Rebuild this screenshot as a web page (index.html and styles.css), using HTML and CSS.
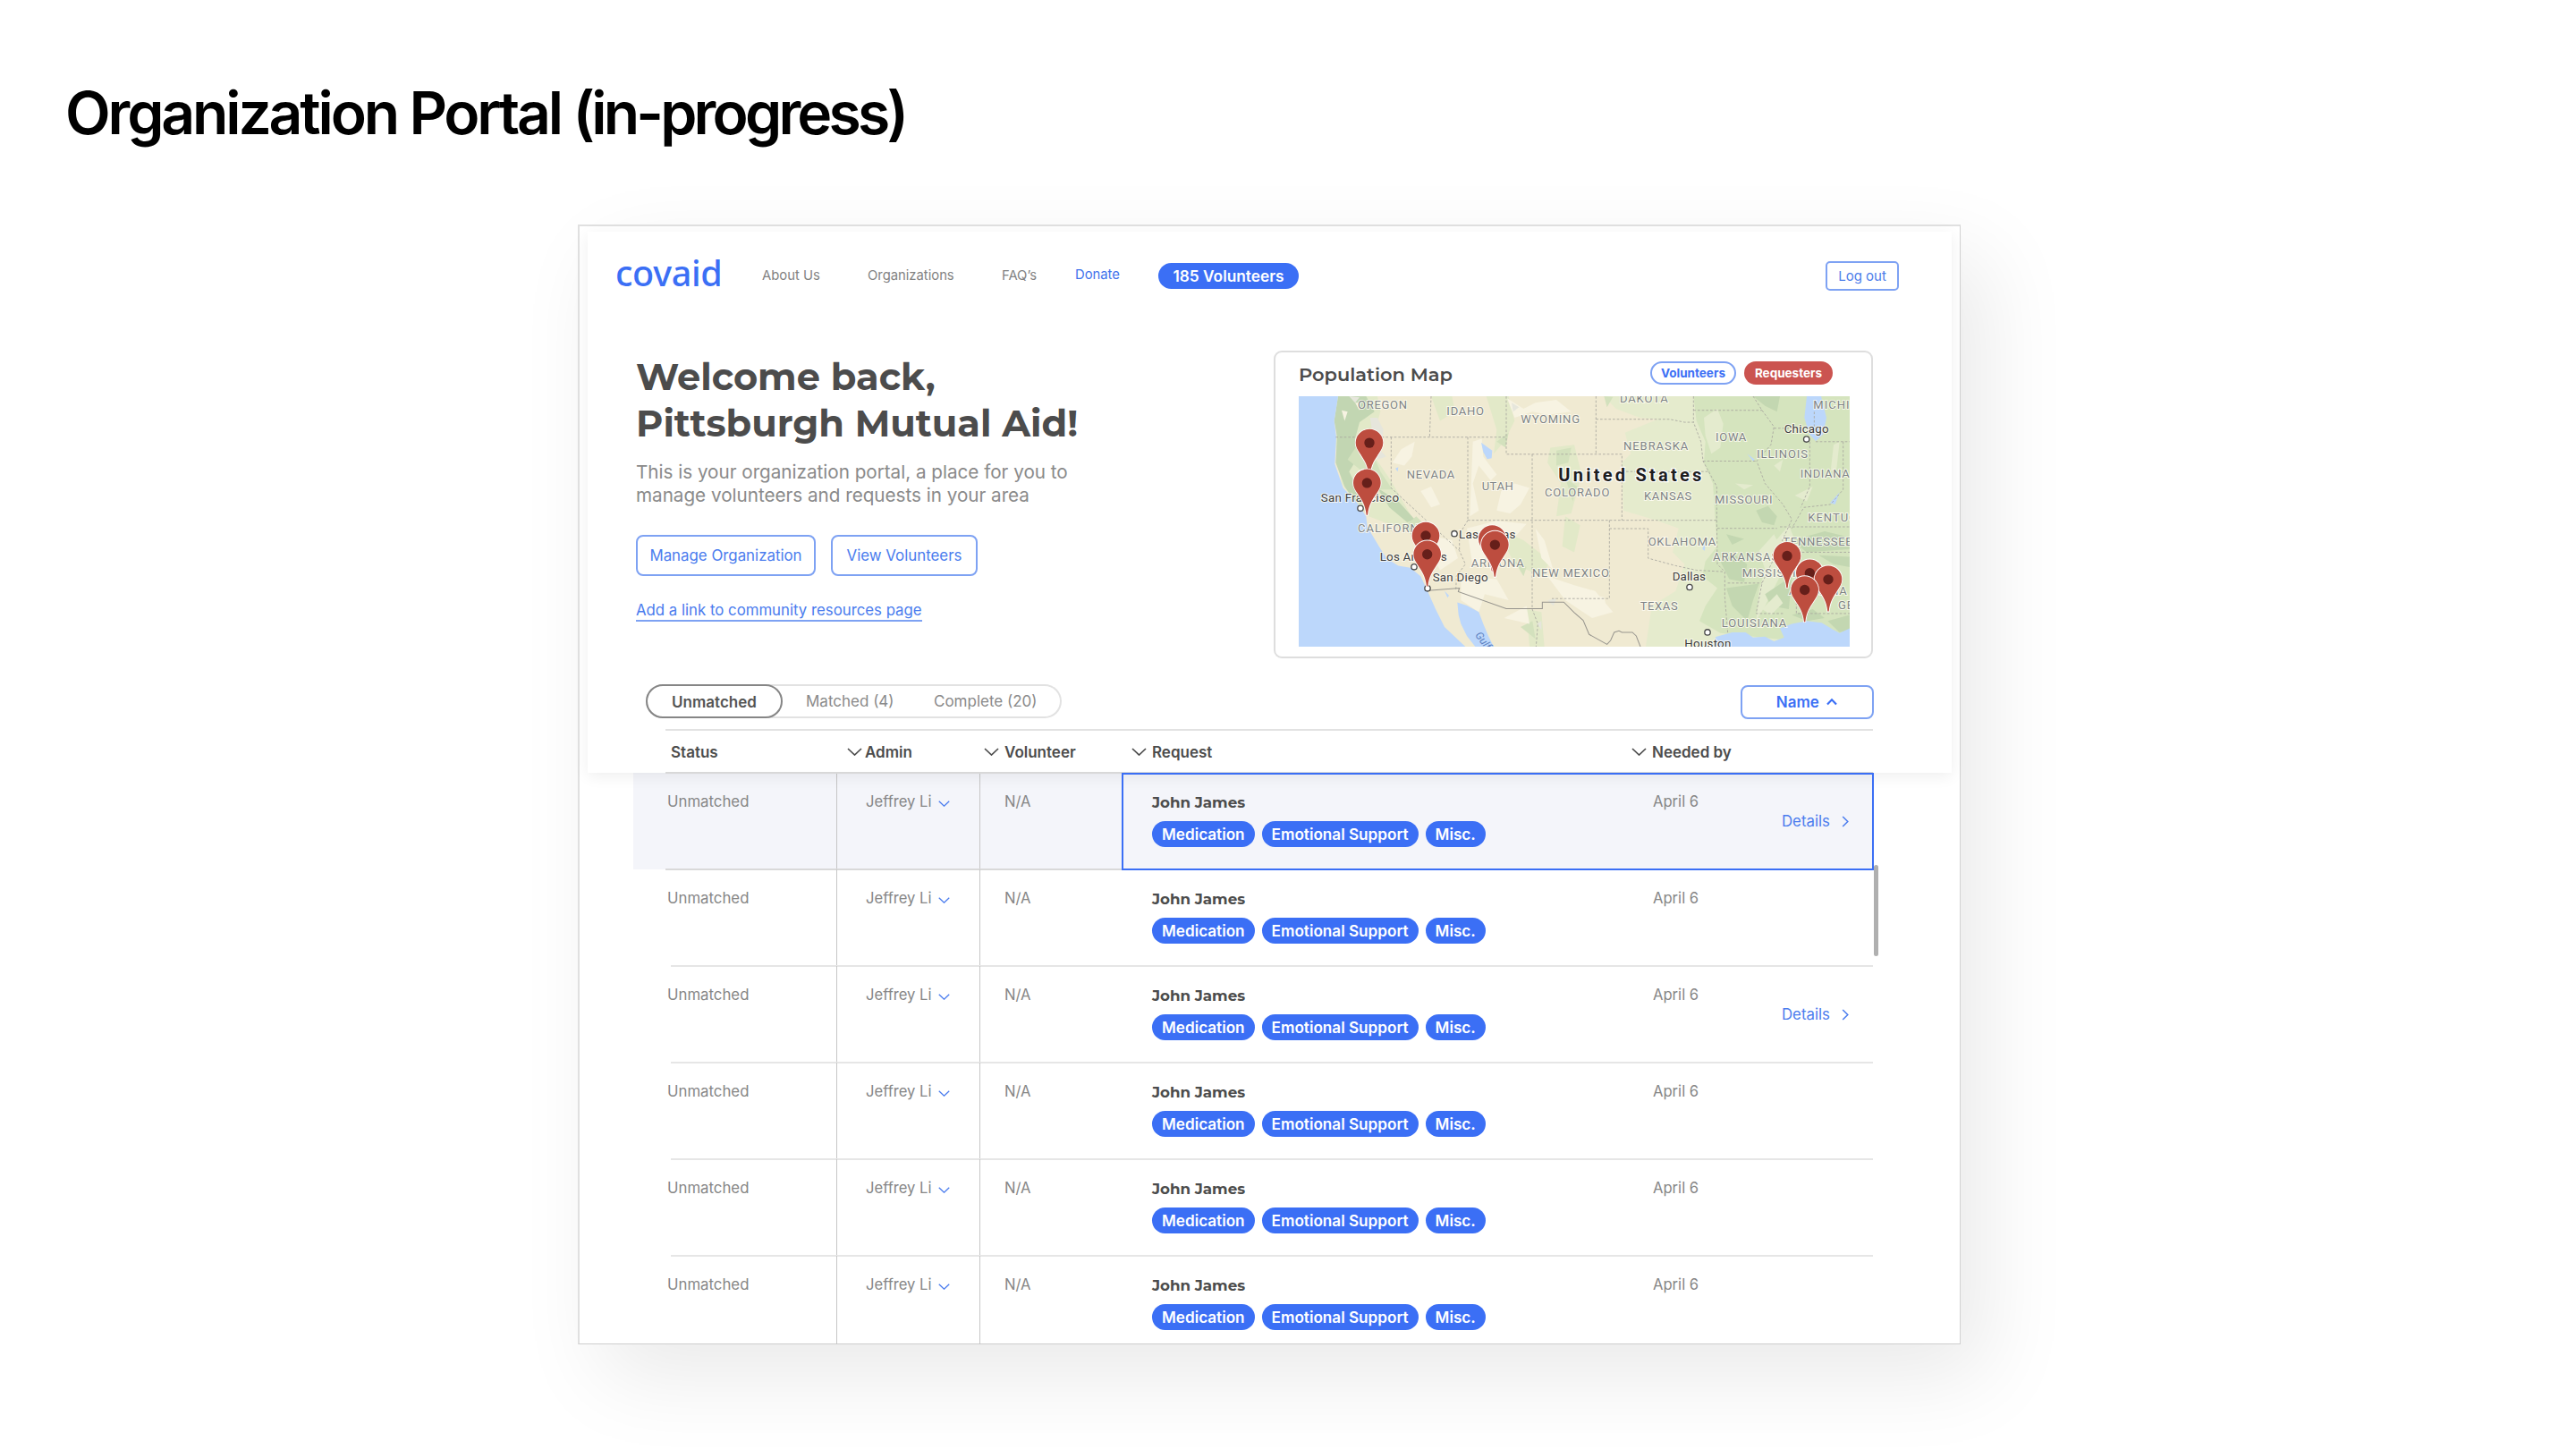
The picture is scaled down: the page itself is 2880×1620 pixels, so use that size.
FILE: index.html
```html
<!DOCTYPE html>
<html lang="en">
<head>
<meta charset="utf-8">
<title>Organization Portal</title>
<link rel="stylesheet" href="styles.css">
</head>
<body>
<svg width="0" height="0" class="defs" aria-hidden="true">
  <symbol id="down" viewBox="0 0 17 9"><path d="M1 1 8.5 8 16 1" fill="none" stroke="currentColor" stroke-width="1.7"/></symbol>
  <symbol id="right" viewBox="0 0 8 13"><path d="M1.2 1 6.8 6.5 1.2 12" fill="none" stroke="currentColor" stroke-width="1.5"/></symbol>
  <symbol id="up" viewBox="0 0 14 9"><path d="M2 7.5 7 2.3 12 7.5" fill="none" stroke="currentColor" stroke-width="2.2"/></symbol>
  <symbol id="pin" viewBox="-50 -50 100 160" overflow="visible"><path d="M-2 107C-6 72-17 58-30 38C-40 23-46 14-46 0A46 46 0 1 1 46 0C46 14 40 23 30 38C17 58 6 72 2 107Z" fill="#bd4d3f" stroke="#fff" stroke-width="5" paint-order="stroke"/><circle r="17" fill="#661f1a"/></symbol>
</svg>

<h1 class="title">Organization Portal <span>(in-progress)</span></h1>

<main class="frame">
  <section class="panel">
    <nav class="nav">
      <span class="logo">covaid</span>
      <a>About Us</a>
      <a>Organizations</a>
      <a>FAQ’s</a>
      <a class="donate">Donate</a>
      <span class="count">185 Volunteers</span>
      <button class="logout">Log out</button>
    </nav>

    <div class="hero">
      <div class="welcome">
        <h2>Welcome back,<br>Pittsburgh Mutual Aid!</h2>
        <p>This is your organization portal, a place for you to<br>manage volunteers and requests in your area</p>
        <div class="actions">
          <button class="manage">Manage Organization</button>
          <button class="view">View Volunteers</button>
        </div>
        <a class="link">Add a link to community resources page</a>
      </div>

      <div class="card">
        <div class="card-head">
          <h3>Population Map</h3>
          <span class="chip volunteers">Volunteers</span>
          <span class="chip requesters">Requesters</span>
        </div>
        <svg class="map" viewBox="36 38 1848 838" preserveAspectRatio="none">
          <rect x="36" y="38" width="1848" height="838" fill="#f0ead2"/>
          <!-- plains and eastern greens -->
          <path fill="#e5ebcd" d="M1060 38 1100 80 1180 110 1240 115 1130 160 1150 230 1120 260 1125 420 1240 455 1310 480 1290 560 1330 600 1300 690 1220 740 1200 876H1884V38Z"/>
          <path fill="#d5e4be" d="M1360 38 1370 120 1400 190 1395 260 1425 330 1435 480 1440 540 1400 590 1390 640 1440 680 1400 740 1380 790 1450 830 1884 876V38Z"/>
          <path fill="#e4ebce" d="M1395 110 1440 80 1460 130 1450 210 1420 230 1400 170ZM1620 540 1680 470 1700 520 1650 640 1600 740 1570 790 1580 690ZM1700 370 1760 340 1740 390ZM1500 330 1560 335 1530 350ZM1830 200 1850 190 1840 280 1820 290Z"/>
          <path fill="#c3d7b1" d="M1570 420 1610 405 1640 440 1630 470 1590 460ZM1450 590 1500 570 1540 600 1530 660 1480 650ZM1470 680 1580 665 1560 720 1540 790 1490 740ZM1600 700 1690 640 1680 750 1620 740ZM1560 38 1650 38 1640 90 1600 70ZM1470 500 1530 515 1490 535ZM1690 520 1800 490 1884 510V550L1740 560ZM1780 570 1884 575V610L1830 600ZM1690 770 1760 750 1800 780 1740 790ZM1810 790 1884 770V820L1850 828Z"/>
          <path fill="#e4ebce" d="M1580 555 1630 500 1660 560 1610 650ZM1630 270 1660 250 1650 290ZM1590 750 1640 700 1660 730 1620 770Z"/>
          <!-- western forests and valleys -->
          <path fill="#e2e9c8" d="M168 38H300L310 90 290 160 290 240 345 320 420 450 480 475 440 500 350 470 270 440 230 400 180 330 160 200ZM665 38H740L760 120 725 190 690 230 700 150ZM880 210 960 200 985 300 950 430 900 440 915 330 870 260ZM700 480 790 520 880 590 850 640 760 600ZM800 750 850 760 860 876H810ZM930 440 980 470 960 560 920 540ZM480 38H550L560 90 510 120Z"/>
          <path fill="#c2d6b2" d="M168 38H262L290 90 240 125 225 180 230 250 205 290 230 340 250 400 225 390 190 340 160 260 165 175 155 120ZM300 345 370 390 425 450 400 460 340 410Z"/>
          <path fill="#d3e1bd" d="M200 250 240 190 280 220 310 290 350 350 310 350 250 290ZM390 475 430 440 470 480 430 520ZM900 220 950 210 940 260 900 270ZM930 310 970 340 955 390ZM700 190 740 160 730 210ZM760 590 800 610 790 640ZM780 810 820 790 830 850ZM1060 38 1090 40 1070 75Z"/>
          <path fill="#f7f3e2" d="M735 45 790 80 830 60 900 50 950 90 870 100 820 90 760 110ZM620 190 650 180 655 240 700 300 680 320 640 270 620 330 640 420 610 440ZM715 355 760 330 810 345 780 400 745 430 700 420ZM380 215 425 190 415 240 390 270 350 260ZM445 355 480 340 510 400 480 410ZM480 505 550 520 570 580 510 620 480 560ZM600 480 700 455 800 465 760 510 700 500 650 600 620 610ZM580 640 700 650 740 720 660 700 640 760 580 720ZM725 780 800 740 810 800ZM830 480 860 520 890 620 850 580ZM870 640 960 670 1030 690 1090 760 1020 780 930 720ZM180 85 200 90 190 120ZM225 60 245 60 240 85ZM420 500 490 540 520 580 440 560ZM1000 700 1060 710 1070 750 1010 745Z"/>
          <path fill="#e6e6dc" d="M275 110 300 110 320 150 310 220 330 240 300 250 285 170ZM205 38 240 42 225 60ZM750 60 775 75 755 90ZM870 720 900 715 890 740ZM835 800 850 790 850 820Z"/>
          <!-- water -->
          <path fill="#bcd7fb" d="M36 38H168L155 120 162 175 157 265 185 345 232 395 262 440 266 475 305 540 330 580 370 605 410 612 445 640 468 690 495 750 525 810 595 876H36ZM568 728 600 738 640 760 655 800 672 840 690 876H628L600 840 580 800 572 770ZM1425 876 1435 843 1490 828 1535 828 1560 845 1600 842 1630 858 1664 845 1650 815 1690 800 1740 790 1790 796 1830 820 1850 830 1884 815V876ZM1740 38H1788L1806 110 1795 165 1770 188 1748 165 1732 110ZM648 193 668 208 685 220 683 245 668 248 655 225ZM525 690 540 705 535 712ZM360 280 370 275 368 290ZM1540 230 1565 250 1560 255ZM1390 550 1400 520 1398 555ZM1818 395 1850 360 1835 400Z"/>
          <!-- state lines -->
          <path class="states" d="M160 175H732M480 38 475 175M346 175V345L460 450 575 555 595 600 565 640 563 690M603 175V455M603 453 575 500V555M732 38V232H1120V453M819 232V750L838 800 832 876M603 453H1438M1033 38V232M1033 115H1280L1330 125H1360L1385 190 1392 255 1438 340V453M1120 290H1415M1078 453V715H885M1078 481H1208V580L1300 605 1370 620 1460 625M1392 255H1572M1360 85H1590M1360 38V125M1560 38 1590 85 1630 140 1620 200 1572 255 1600 330 1660 400 1690 450 1640 560 1590 663 1570 765H1660M1440 480H1640M1438 453 1440 600 1465 625V710L1475 830M1475 663H1590M1650 475H1884M1640 560H1884M1630 145H1700M1770 190H1884M1862 190V350L1820 400 1730 410 1690 480M1750 190V340L1720 410M1705 560V765H1884M1765 90V140"/>
          <path class="border" d="M470 688 575 680 571 692 732 749H853V727H925L960 762 990 788 1010 835 1070 868 1082 855 1094 828 1110 823 1120 828H1155L1168 840 1182 876"/>
          <g class="labels state-names">
            <text x="234" y="81" textLength="168">OREGON</text>
            <text x="532" y="100" textLength="128">IDAHO</text>
            <text x="781" y="128" textLength="200">WYOMING</text>
            <text x="1113" y="59" textLength="164">DAKOTA</text>
            <text x="398" y="314" textLength="164">NEVADA</text>
            <text x="650" y="352" textLength="108">UTAH</text>
            <text x="861" y="374" textLength="220">COLORADO</text>
            <text x="1125" y="217" textLength="220">NEBRASKA</text>
            <text x="1434" y="187" textLength="106">IOWA</text>
            <text x="1572" y="246" textLength="174">ILLINOIS</text>
            <text x="1762" y="81">MICHIGAN</text>
            <text x="1718" y="310" textLength="168">INDIANA</text>
            <text x="1194" y="386" textLength="163">KANSAS</text>
            <text x="1431" y="396" textLength="197">MISSOURI</text>
            <text x="1744" y="458">KENTUCKY</text>
            <text x="1660" y="538" textLength="235">TENNESSEE</text>
            <text x="234" y="494">CALIFORNIA</text>
            <text x="1208" y="538" textLength="230">OKLAHOMA</text>
            <text x="1425" y="589">ARKANSAS</text>
            <text x="1523" y="644">MISSISSIPPI</text>
            <text x="819" y="642" textLength="261">NEW MEXICO</text>
            <text x="614" y="610" textLength="180">ARIZONA</text>
            <text x="1181" y="754" textLength="129">TEXAS</text>
            <text x="1454" y="811" textLength="221">LOUISIANA</text>
            <text x="1680" y="702" textLength="197">ALABAMA</text>
            <text x="1845" y="751">GEORGIA</text>
          </g>
          <text class="gulf" transform="translate(626 838) rotate(52)">Gulf of</text>
          <g class="labels cities">
            <text x="110" y="392" textLength="262">San Francisco</text>
            <text x="308" y="588" textLength="225">Los Angeles</text>
            <text x="573" y="513" textLength="190">Las Vegas</text>
            <text x="485" y="659" textLength="186">San Diego</text>
            <text x="1664" y="160" textLength="150">Chicago</text>
            <text x="1289" y="655" textLength="112">Dallas</text>
            <text x="1330" y="878" textLength="156">Houston</text>
          </g>
          <g fill="#fff" stroke="#4a4a4a" stroke-width="4">
            <circle cx="243" cy="413" r="9.5"/><circle cx="423" cy="609" r="9.5"/><circle cx="558" cy="498" r="9.5"/><circle cx="468" cy="681" r="9.5"/><circle cx="1739" cy="182" r="9.5"/><circle cx="1347" cy="677" r="9.5"/><circle cx="1407" cy="828" r="9.5"/>
          </g>
          <text class="country" x="907" y="322" textLength="484">United States</text>
          <g>
            <use href="#pin" x="223" y="144" width="100" height="160"/>
            <use href="#pin" x="215" y="278" width="100" height="160"/>
            <use href="#pin" x="412" y="455" width="100" height="160"/>
            <use href="#pin" x="417" y="517" width="100" height="160"/>
            <use href="#pin" x="635" y="466" width="100" height="160"/>
            <use href="#pin" x="644" y="485" width="100" height="160"/>
            <use href="#pin" x="1624" y="522" width="100" height="160"/>
            <use href="#pin" x="1700" y="580" width="100" height="160"/>
            <use href="#pin" x="1762" y="601" width="100" height="160"/>
            <use href="#pin" x="1683" y="636" width="100" height="160"/>
          </g>
        </svg>
      </div>
    </div>

    <div class="toolbar">
      <div class="tabs">
        <span class="tab active">Unmatched</span>
        <span class="tab matched">Matched (4)</span>
        <span class="tab complete">Complete (20)</span>
      </div>
      <button class="sort">Name <svg width="14" height="9"><use href="#up"/></svg></button>
    </div>

    <div class="columns">
      <span class="col first">Status</span>
      <span class="col tight"><svg width="17" height="9"><use href="#down"/></svg>Admin</span>
      <span class="col"><svg width="17" height="9"><use href="#down"/></svg>Volunteer</span>
      <span class="col"><svg width="17" height="9"><use href="#down"/></svg>Request</span>
      <span class="col"><svg width="17" height="9"><use href="#down"/></svg>Needed by</span>
    </div>
  </section>

  <section class="rows">
    <article class="row selected">
      <div class="status">Unmatched</div>
      <div class="admin">Jeffrey Li<svg width="13" height="7"><use href="#down"/></svg></div>
      <div class="vol">N/A</div>
      <div class="request">
        <div class="who"><strong>John James</strong><div class="tags"><span>Medication</span><span>Emotional Support</span><span>Misc.</span></div></div>
        <div class="date">April 6</div>
        <a class="details">Details<svg width="8" height="13"><use href="#right"/></svg></a>
      </div>
    </article>
    <article class="row">
      <div class="status">Unmatched</div>
      <div class="admin">Jeffrey Li<svg width="13" height="7"><use href="#down"/></svg></div>
      <div class="vol">N/A</div>
      <div class="request">
        <div class="who"><strong>John James</strong><div class="tags"><span>Medication</span><span>Emotional Support</span><span>Misc.</span></div></div>
        <div class="date">April 6</div>
      </div>
    </article>
    <article class="row">
      <div class="status">Unmatched</div>
      <div class="admin">Jeffrey Li<svg width="13" height="7"><use href="#down"/></svg></div>
      <div class="vol">N/A</div>
      <div class="request">
        <div class="who"><strong>John James</strong><div class="tags"><span>Medication</span><span>Emotional Support</span><span>Misc.</span></div></div>
        <div class="date">April 6</div>
        <a class="details">Details<svg width="8" height="13"><use href="#right"/></svg></a>
      </div>
    </article>
    <article class="row">
      <div class="status">Unmatched</div>
      <div class="admin">Jeffrey Li<svg width="13" height="7"><use href="#down"/></svg></div>
      <div class="vol">N/A</div>
      <div class="request">
        <div class="who"><strong>John James</strong><div class="tags"><span>Medication</span><span>Emotional Support</span><span>Misc.</span></div></div>
        <div class="date">April 6</div>
      </div>
    </article>
    <article class="row">
      <div class="status">Unmatched</div>
      <div class="admin">Jeffrey Li<svg width="13" height="7"><use href="#down"/></svg></div>
      <div class="vol">N/A</div>
      <div class="request">
        <div class="who"><strong>John James</strong><div class="tags"><span>Medication</span><span>Emotional Support</span><span>Misc.</span></div></div>
        <div class="date">April 6</div>
      </div>
    </article>
    <article class="row">
      <div class="status">Unmatched</div>
      <div class="admin">Jeffrey Li<svg width="13" height="7"><use href="#down"/></svg></div>
      <div class="vol">N/A</div>
      <div class="request">
        <div class="who"><strong>John James</strong><div class="tags"><span>Medication</span><span>Emotional Support</span><span>Misc.</span></div></div>
        <div class="date">April 6</div>
      </div>
    </article>
    <div class="scrollbar"></div>
  </section>
</main>
</body>
</html>
```
FILE: styles.css
```css
* { box-sizing: border-box; }
body {
  margin: 0;
  height: 1620px;
  overflow: hidden;
  background: #fff;
  color: #4f4f4f;
  font-family: Inter, "Liberation Sans", sans-serif;
}
h1, h2, h3, p { margin: 0; }
button { font: inherit; background: #fff; padding: 0; white-space: nowrap; }
.defs { position: absolute; }

.title {
  padding: 93px 0 0 73px;
  height: 251px;
  font-size: 66px;
  line-height: 66px;
  font-weight: 600;
  letter-spacing: -3.15px;
  color: #000;
}
.title span { letter-spacing: -3.8px; }

.frame {
  width: 1546px;
  height: 1252px;
  margin-left: 646px;
  border: solid #e0e0e0;
  border-width: 2px 1px 1px 2px;
  border-right-color: #d2d2d2;
  border-bottom-color: #cecece;
  background: #fff;
  box-shadow: 28px 36px 90px rgba(0, 0, 0, .085);
}
.panel {
  position: relative;
  z-index: 1;
  width: 1525px;
  height: 605px;
  margin: 6px 0 0 9px;
  background: #fff;
  box-shadow: 0 4px 16px rgba(0, 0, 0, .065);
}

/* navigation */
.nav {
  display: grid;
  grid-template-columns: 162px 118px 150px 82px 93px 1fr 82px;
  align-items: center;
  height: 98px;
  padding: 0 59px 0 33px;
  font-size: 14.8px;
  color: #828282;
}
.logo {
  font: 500 39.5px/40px "Noto Sans", "Open Sans", sans-serif;
  letter-spacing: -.3px;
  color: #3b6ff5;
  margin: -6px 0 0 -2px;
}
.donate { color: #3f72ec; margin-top: -2px; }
.count {
  justify-self: start;
  width: 157px;
  height: 29px;
  border-radius: 15px;
  background: #3b6ff5;
  color: #fff;
  font-size: 17.3px;
  font-weight: 600;
  line-height: 29px;
  text-align: center;
}
.logout {
  height: 33px;
  border: 2px solid #7ea2f3;
  border-radius: 5px;
  color: #4d7eea;
  font-size: 15px;
}

/* welcome + map */
.hero {
  display: flex;
  justify-content: space-between;
  height: 378px;
  padding: 35px 88px 0 54px;
}
.welcome { padding-top: 3px; }
.welcome h2 { font-family: Montserrat, Inter, sans-serif; font-size: 41.5px; line-height: 52px; font-weight: 700; color: #4c4c4c; }
.welcome p { margin-top: 16px; font-size: 20.65px; line-height: 25.5px; color: #8a8a8a; }
.actions { display: flex; gap: 17px; margin-top: 32px; }
.actions button {
  height: 46px;
  border: 2px solid #7ea2f3;
  border-radius: 8px;
  color: #4a7cee;
  font-size: 16.85px;
}
.manage { width: 201px; }
.view { width: 164px; }
.link {
  display: inline-block;
  margin-top: 27px;
  font-size: 16.8px;
  line-height: 22px;
  color: #4a7cee;
  border-bottom: 2px solid #7ea2f3;
}

.card {
  width: 670px;
  height: 344px;
  padding: 10px 23px 0 26px;
  border: 2px solid #dedede;
  border-radius: 9px;
}
.card-head { display: flex; height: 39px; }
.card-head h3 { flex: 1; font: 600 21px/29px Montserrat, Inter, sans-serif; color: #4c4c4c; }
.chip {
  height: 26px;
  border-radius: 13px;
  font-size: 13.5px;
  font-weight: 700;
  line-height: 26px;
  text-align: center;
}
.volunteers { width: 96px; margin-right: 9px; border: 2px solid #7ea2f3; line-height: 22px; color: #3b6ff5; }
.requesters { width: 99px; margin-right: 20px; background: #cb5450; color: #fff; }

.map { display: block; width: 616px; height: 280px; font-family: Roboto, sans-serif; }
.states { fill: none; stroke: #a9a79f; stroke-width: 2.6; stroke-dasharray: 8 6; }
.border { fill: none; stroke: #97958e; stroke-width: 3; }
.labels { paint-order: stroke; stroke: #fffdf4; stroke-width: 6; stroke-opacity: .8; }
.state-names { font-size: 39px; letter-spacing: 3px; fill: #7e8385; }
.cities { font-size: 40px; fill: #3d3d3d; }
.country { font-size: 60px; font-weight: 700; letter-spacing: 4px; fill: #1d1d1f; paint-order: stroke; stroke: #fff; stroke-width: 7; }
.gulf { font-size: 36px; font-style: italic; fill: #5c82c2; }

/* tabs */
.toolbar {
  display: flex;
  justify-content: space-between;
  padding: 30px 87px 0 65px;
  height: 80px;
}
.tabs {
  display: flex;
  width: 465px;
  height: 38px;
  border-radius: 20px;
  box-shadow: inset 0 0 0 2px #e2e2e2;
  font-size: 17px;
  line-height: 39px;
  color: #8a8a8a;
}
.active {
  width: 153px;
  border: 2px solid #868686;
  border-radius: 20px;
  line-height: 36px;
  text-align: center;
  font-weight: 600;
  color: #545454;
}
.matched { width: 143px; padding-left: 26px; }
.complete { padding-left: 26px; }
.sort {
  width: 149px;
  height: 38px;
  margin-top: 1px;
  border: 2px solid #7ea2f3;
  border-radius: 8px;
  font-size: 17px;
  font-weight: 600;
  color: #3b6ff5;
}
.sort svg { margin-left: 3px; vertical-align: 2px; }

.columns {
  display: grid;
  grid-template-columns: 203px 153px 165px 559px 1fr;
  align-items: center;
  width: 1350px;
  height: 50px;
  margin-left: 87px;
  padding-top: 1px;
  border-top: 2px solid #e2e2e2;
  border-bottom: 2px solid #d8d8d8;
  font-size: 17px;
  font-weight: 600;
  color: #4c4c4c;
}
.col { display: flex; align-items: center; gap: 6px; }
.tight { gap: 3px; }
.first { padding-left: 6px; }

/* requests */
.rows { position: relative; height: 640px; margin: -1px 0 0 60px; padding-top: 1px; overflow: hidden; }
.row {
  position: relative;
  display: grid;
  grid-template-columns: 228px 160px 158px 841px;
  height: 108px;
  font-size: 16.6px;
  line-height: 22px;
  color: #868686;
}
.row::after {
  content: "";
  position: absolute;
  left: 42px;
  bottom: -1px;
  width: 1344px;
  height: 2px;
  background: #e6e6e6;
}
.row > div { padding-top: 21px; }
.row .status { padding-left: 38px; border-right: 1px solid #c6c6c6; font-size: 16.8px; }
.row .admin { padding-left: 32px; border-right: 1px solid #c6c6c6; }
.admin svg { margin-left: 7px; vertical-align: 0; color: #4a7cee; }
.row .vol { padding-left: 27px; }
.row .request { display: grid; grid-template-columns: 560px 144px 1fr; padding: 21px 0 0 34px; }
.who strong { display: block; font: 700 16.7px/24px Montserrat, Inter, sans-serif; color: #4c4c4c; }
.tags { display: flex; gap: 8px; margin-top: 9px; }
.tags span {
  height: 29px;
  padding: 0 11px;
  border-radius: 15px;
  background: #3b6ff5;
  color: #fff;
  font-size: 17.15px;
  font-weight: 600;
  line-height: 29px;
}
.details { display: flex; align-items: center; gap: 13px; height: 22px; margin-top: 22px; color: #4a7cee; font-size: 16.8px; }
.selected { background: linear-gradient(90deg, #f4f5fa 1386px, transparent 1386px); }
.selected::after { left: 36px; width: 510px; background: #d9d9d9; }
.selected .request { z-index: 1; height: 109px; padding: 19px 0 0 32px; border: 2px solid #3b6ff5; }
.scrollbar { position: absolute; left: 1387px; top: 104px; width: 5px; height: 102px; border-radius: 3px; background: #b0b0b0; }
```
